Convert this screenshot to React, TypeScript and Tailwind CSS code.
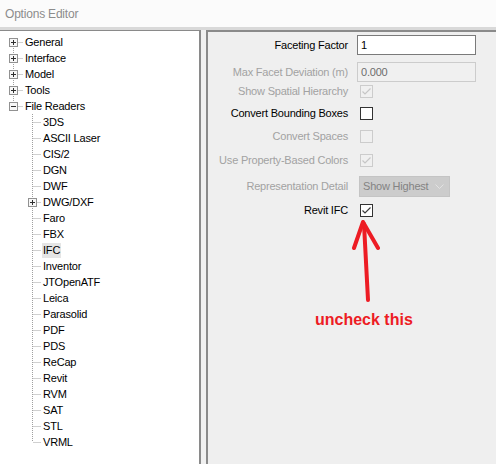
import React from 'react';

const ui = { fontFamily: '"Liberation Sans", Arial, sans-serif' };

const topItems = [
  { label: 'General', open: false },
  { label: 'Interface', open: false },
  { label: 'Model', open: false },
  { label: 'Tools', open: false },
  { label: 'File Readers', open: true },
];

const readers = [
  '3DS', 'ASCII Laser', 'CIS/2', 'DGN', 'DWF', 'DWG/DXF', 'Faro', 'FBX', 'IFC',
  'Inventor', 'JTOpenATF', 'Leica', 'Parasolid', 'PDF', 'PDS', 'ReCap', 'Revit',
  'RVM', 'SAT', 'STL', 'VRML',
];

function ExpandBox({ x, open }: { x: number; open: boolean }) {
  const cx = x + 4.5;
  return (
    <g>
      <rect x={x + 0.5} y={4.5} width={8} height={8} fill="#f7f7f7" stroke="#919191" />
      <line x1={x + 2} y1={8.5} x2={x + 7} y2={8.5} stroke="#2f2f2f" />
      {!open && <line x1={cx} y1={6} x2={cx} y2={11} stroke="#2f2f2f" />}
    </g>
  );
}

// dotted connector graphics for one tree row
function Lines({ level, first, last, box, open }: { level: number; first: boolean; last: boolean; box: boolean; open: boolean }) {
  const vx = level === 0 ? 13.5 : 32.5;
  const w = level === 0 ? 24 : 42;
  return (
    <svg width={w} height={16} className="shrink-0">
      <line x1={vx} y1={first ? 8 : 0} x2={vx} y2={last ? 8 : 16} stroke="#a0a0a0" strokeDasharray="1 1" />
      <line x1={vx + 1} y1={8.5} x2={w - 1} y2={8.5} stroke="#a0a0a0" strokeDasharray="1 1" />
      {box && <ExpandBox x={level === 0 ? 9 : 28} open={open} />}
    </svg>
  );
}

function TreeRow({ label, level, first = false, last = false, box = false, open = false, selected = false }: {
  label: string; level: number; first?: boolean; last?: boolean; box?: boolean; open?: boolean; selected?: boolean;
}) {
  return (
    <div className="flex h-4 items-center">
      <Lines level={level} first={first} last={last} box={box} open={open} />
      <span className={`px-px leading-[15px] ${selected ? 'bg-[#e5e5e5]' : ''}`}>{label}</span>
    </div>
  );
}

function Check({ checked, disabled }: { checked: boolean; disabled?: boolean }) {
  return (
    <div
      className={`flex h-[13px] w-[13px] items-center justify-center border ${
        disabled ? 'border-[#cccccc] bg-[#f0f0f0]' : 'border-[#333333] bg-white'
      }`}
    >
      {checked && (
        <svg width={11} height={11} viewBox="0 0 11 11">
          <path d="M1.5 5.5 L4 8 L9.5 2.5" fill="none" stroke={disabled ? '#c6c6c6' : '#3c3c3c'} strokeWidth={1.2} />
        </svg>
      )}
    </div>
  );
}

function Row({ label, disabled, className, children }: { label: string; disabled?: boolean; className: string; children: React.ReactNode }) {
  return (
    <div className={`flex items-center ${className}`}>
      <div className={`w-[140px] text-right ${disabled ? 'text-[#a2a2a2]' : 'text-black'}`}>{label}</div>
      <div className="ml-[9px] flex items-center">{children}</div>
    </div>
  );
}

export default function App() {
  return (
    <div className="flex h-[464px] w-[496px] flex-col overflow-hidden bg-[#f0f0f0] text-[11px] tracking-[-0.2px]" style={ui}>
      <div className="flex h-[27px] items-center bg-[#fbfbfb] pl-[5px] text-[12px] text-[#8c8c8c]">Options Editor</div>
      <div className="h-[3px] bg-[#d9d9d9]" />

      <div className="flex flex-1 gap-[5px]">
        {/* tree */}
        <div className="w-[201px] border-t border-r-2 border-[#8a8a8a] bg-white pt-[3px] text-black">
          {topItems.map((it, i) => (
            <TreeRow
              key={it.label}
              label={it.label}
              level={0}
              first={i === 0}
              last={i === topItems.length - 1}
              box
              open={it.open}
            />
          ))}
          {readers.map((r, i) => (
            <TreeRow
              key={r}
              label={r}
              level={1}
              last={i === readers.length - 1}
              box={r === 'DWG/DXF'}
              selected={r === 'IFC'}
            />
          ))}
        </div>

        {/* settings */}
        <div className="flex-1 border-t-2 border-l-2 border-[#8a8a8a] bg-[#efefef]">
          <Row label="Faceting Factor" className="mt-[3px] h-5">
            <div className="flex h-5 w-[119px] items-center border border-[#7a7a7a] bg-white pl-[3px]">1</div>
          </Row>
          <Row label="Max Facet Deviation (m)" disabled className="mt-[7px] h-5">
            <div className="flex h-5 w-[119px] items-center border border-[#cccccc] bg-[#f0f0f0] pl-[3px] text-[#6d6d6d]">0.000</div>
          </Row>
          <Row label="Show Spatial Hierarchy" disabled className="mt-[3px] h-[13px]">
            <div className="ml-[3px]"><Check checked disabled /></div>
          </Row>
          <Row label="Convert Bounding Boxes" className="mt-[9px] h-[13px]">
            <div className="ml-[3px]"><Check checked={false} /></div>
          </Row>
          <Row label="Convert Spaces" disabled className="mt-[10px] h-[13px]">
            <div className="ml-[3px]"><Check checked={false} disabled /></div>
          </Row>
          <Row label="Use Property-Based Colors" disabled className="mt-[11px] h-[13px]">
            <div className="ml-[3px]"><Check checked disabled /></div>
          </Row>
          <Row label="Representation Detail" disabled className="mt-[9px] h-[21px]">
            <div className="ml-[2px] flex h-[21px] w-[91px] items-center justify-between border border-[#c4c4c4] bg-[#cccccc] pl-[3px] pr-[5px] text-[#838383]">
              <span>Show Highest</span>
              <svg width={9} height={6} viewBox="0 0 9 6">
                <path d="M0.5 0.5 L4.5 4.5 L8.5 0.5" fill="none" stroke="#e2e2e2" />
              </svg>
            </div>
          </Row>
          <Row label="Revit IFC" className="mt-[7px] h-[13px]">
            <div className="ml-[3px]"><Check checked /></div>
          </Row>

          <svg width={30} height={82} viewBox="0 0 30 82" className="ml-[142px] mt-[3px] block">
            <g stroke="#ed1c24" strokeWidth={4} strokeLinecap="round" strokeLinejoin="round" fill="none">
              <path d="M14 4 L18 80" />
              <path d="M4 28 L13 2 L28 28" />
            </g>
          </svg>
          <div className="ml-[107px] mt-[6px] text-[16px] font-bold tracking-normal text-[#ed1c24]">uncheck this</div>
        </div>
      </div>
    </div>
  );
}
